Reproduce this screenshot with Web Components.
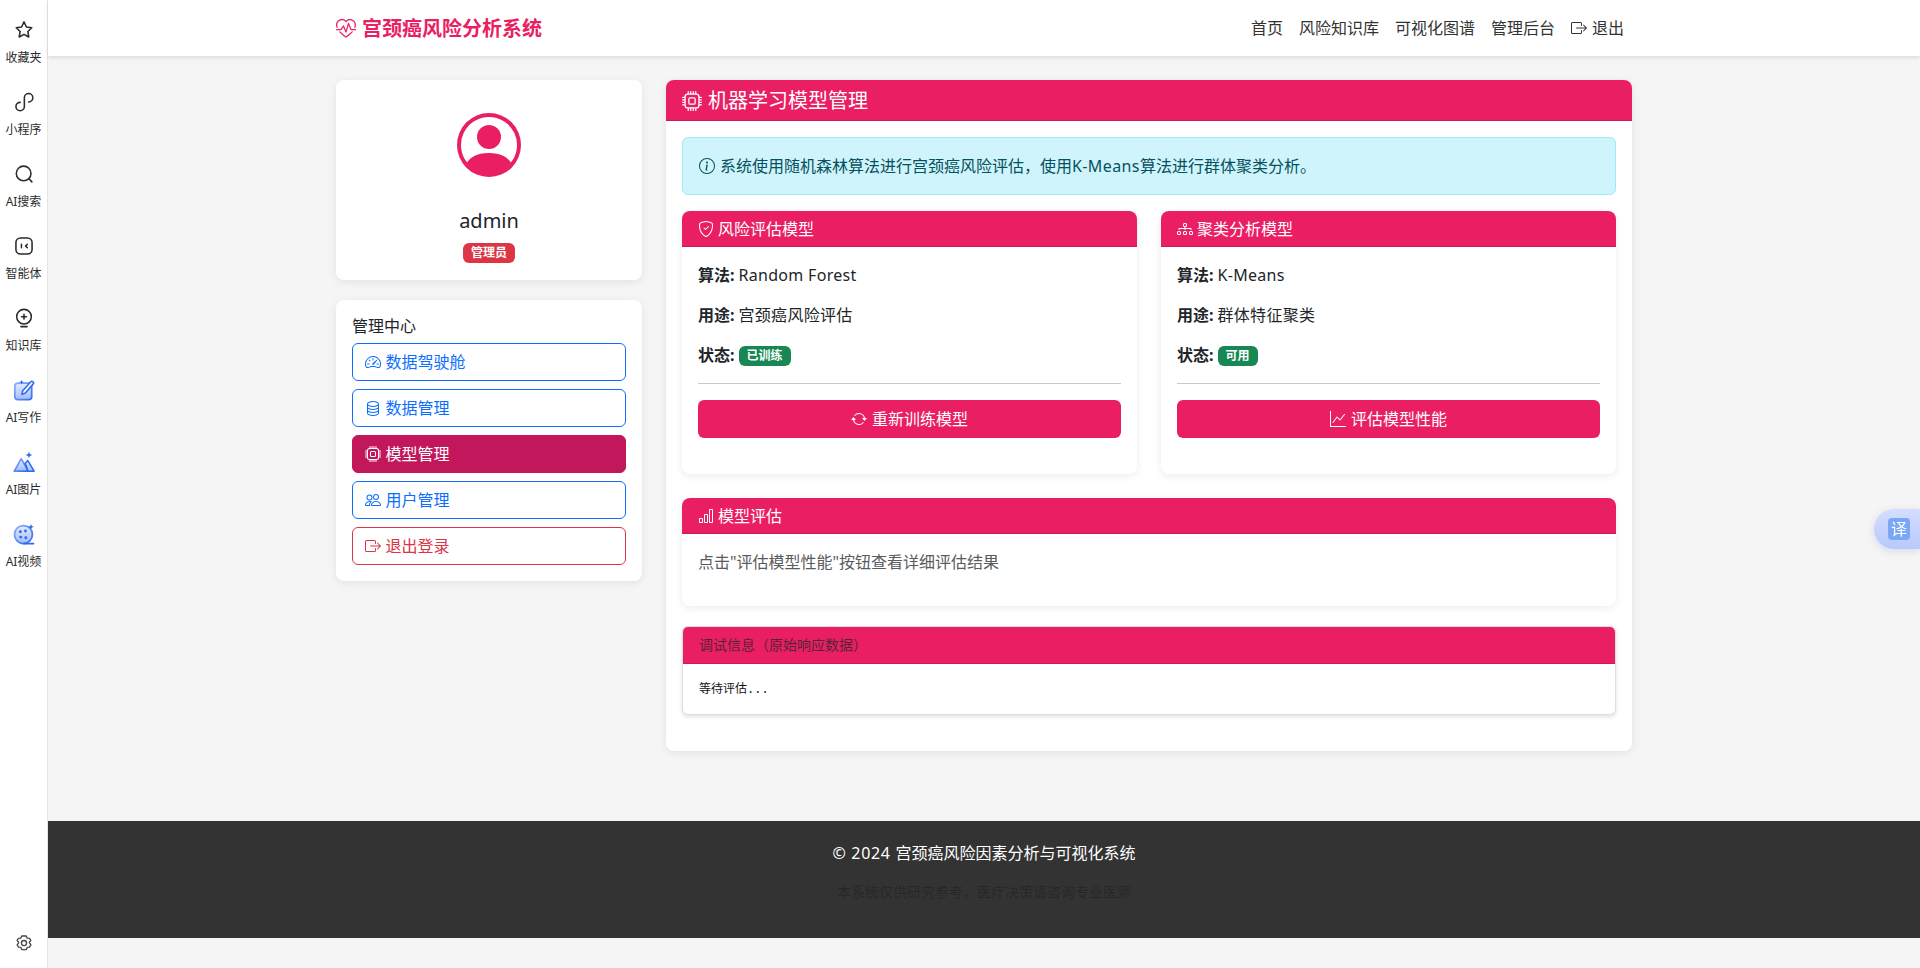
<!DOCTYPE html>
<html lang="zh-CN">
<head>
<meta charset="utf-8">
<title>宫颈癌风险分析系统</title>
<style>
  html, body {
    margin: 0;
    height: 100%;
  }

  body {
    display: flex;
    overflow: hidden;
    background: #f5f5f5;
    color: #212529;
    font: 16px/1.5 "Noto Sans", "Noto Sans CJK SC", sans-serif;
  }
</style>
</head>
<body>
  <side-rail>
    <rail-item icon="star">收藏夹</rail-item>
    <rail-item icon="mini">小程序</rail-item>
    <rail-item icon="search">AI搜索</rail-item>
    <rail-item icon="agent">智能体</rail-item>
    <rail-item icon="bulb">知识库</rail-item>
    <rail-item icon="write">AI写作</rail-item>
    <rail-item icon="image">AI图片</rail-item>
    <rail-item icon="video">AI视频</rail-item>
  </side-rail>

  <page-column>
    <top-nav></top-nav>

    <main-grid>
      <div slot="left">
        <profile-card name="admin" role="管理员"></profile-card>
        <menu-card heading="管理中心">
          <menu-btn icon="speedometer2">数据驾驶舱</menu-btn>
          <menu-btn icon="database">数据管理</menu-btn>
          <menu-btn icon="cpu" active>模型管理</menu-btn>
          <menu-btn icon="people">用户管理</menu-btn>
          <menu-btn icon="box-arrow-right" danger>退出登录</menu-btn>
        </menu-card>
      </div>

      <model-panel slot="right" heading="机器学习模型管理" icon="cpu">
        <info-alert><span>系统使用随机森林算法进行宫颈癌风险评估，使用<span style="letter-spacing:.4px">K-Means</span>算法进行群体聚类分析。</span></info-alert>
        <div class="pair" style="display:grid;grid-template-columns:1fr 1fr;gap:24px">
          <model-card heading="风险评估模型" icon="shield-check" algo="Random Forest" usage="宫颈癌风险评估" status="已训练" action="重新训练模型" action-icon="arrow-repeat"></model-card>
          <model-card heading="聚类分析模型" icon="diagram-3" algo="K-Means" usage="群体特征聚类" status="可用" action="评估模型性能" action-icon="graph-up"></model-card>
        </div>
        <eval-card heading="模型评估" icon="bar-chart">点击"评估模型性能"按钮查看详细评估结果</eval-card>
        <debug-box heading="调试信息（原始响应数据）">等待评估...</debug-box>
      </model-panel>
    </main-grid>

    <site-footer></site-footer>
  </page-column>

  <translate-fab></translate-fab>

<script>
const biPaths = {
  'heart-pulse': ['m8 2.748-.717-.737C5.6.281 2.514.878 1.4 3.053.918 3.995.78 5.323 1.508 7H.43c-2.128-5.697 4.165-8.83 7.394-5.857q.09.083.176.171a3 3 0 0 1 .176-.17c3.23-2.974 9.522.159 7.394 5.856h-1.078c.728-1.677.59-3.005.108-3.947C13.486.878 10.4.28 8.717 2.01zM2.212 10h1.315C4.593 11.183 6.05 12.458 8 13.795c1.949-1.337 3.407-2.612 4.473-3.795h1.315c-1.265 1.566-3.14 3.25-5.788 5-2.648-1.75-4.523-3.434-5.788-5', 'M10.464 3.314a.5.5 0 0 0-.945.049L7.921 8.956 6.464 5.314a.5.5 0 0 0-.88-.091L3.732 8H.5a.5.5 0 0 0 0 1H4a.5.5 0 0 0 .416-.223l1.473-2.209 1.647 4.118a.5.5 0 0 0 .945-.049l1.598-5.593 1.457 3.642A.5.5 0 0 0 12 9h3.5a.5.5 0 0 0 0-1h-3.162z'],
  'person-circle': ['M11 6a3 3 0 1 1-6 0 3 3 0 0 1 6 0', 'M0 8a8 8 0 1 1 16 0A8 8 0 0 1 0 8m8-7a7 7 0 0 0-5.468 11.37C3.242 11.226 4.805 10 8 10s4.757 1.225 5.468 2.37A7 7 0 0 0 8 1'],
  'speedometer2': ['M8 4a.5.5 0 0 1 .5.5V6a.5.5 0 0 1-1 0V4.5A.5.5 0 0 1 8 4M3.732 5.732a.5.5 0 0 1 .707 0l.915.914a.5.5 0 1 1-.708.708l-.914-.915a.5.5 0 0 1 0-.707M2 10a.5.5 0 0 1 .5-.5h1.586a.5.5 0 0 1 0 1H2.5A.5.5 0 0 1 2 10m9.5 0a.5.5 0 0 1 .5-.5h1.5a.5.5 0 0 1 0 1H12a.5.5 0 0 1-.5-.5m.754-4.246a.39.39 0 0 0-.527-.02L7.547 9.31a.91.91 0 1 0 1.302 1.258l3.434-4.297a.39.39 0 0 0-.029-.518z', 'M0 10a8 8 0 1 1 15.547 2.661c-.442 1.253-1.845 1.602-2.932 1.25C11.309 13.488 9.475 13 8 13c-1.474 0-3.31.488-4.615.911-1.087.352-2.49.003-2.932-1.25A8 8 0 0 1 0 10m8-7a7 7 0 0 0-6.603 9.329c.203.575.923.876 1.68.63C4.397 12.533 6.358 12 8 12s3.604.532 4.923.96c.757.245 1.477-.056 1.68-.631A7 7 0 0 0 8 3'],
  'database': ['M4.318 2.687C5.234 2.271 6.536 2 8 2s2.766.27 3.682.687C12.644 3.125 13 3.627 13 4c0 .374-.356.875-1.318 1.313C10.766 5.729 9.464 6 8 6s-2.766-.27-3.682-.687C3.356 4.875 3 4.373 3 4c0-.374.356-.875 1.318-1.313M13 5.698V7c0 .374-.356.875-1.318 1.313C10.766 8.729 9.464 9 8 9s-2.766-.27-3.682-.687C3.356 7.875 3 7.373 3 7V5.698c.271.202.58.378.904.525C4.978 6.711 6.427 7 8 7s3.022-.289 4.096-.777A5 5 0 0 0 13 5.698M14 4c0-1.007-.875-1.755-1.904-2.223C11.022 1.289 9.573 1 8 1s-3.022.289-4.096.777C2.875 2.245 2 2.993 2 4v9c0 1.007.875 1.755 1.904 2.223C4.978 15.71 6.427 16 8 16s3.022-.289 4.096-.777C13.125 14.755 14 14.007 14 13zm-1 4.698V10c0 .374-.356.875-1.318 1.313C10.766 11.729 9.464 12 8 12s-2.766-.27-3.682-.687C3.356 10.875 3 10.373 3 10V8.698c.271.202.58.378.904.525C4.978 9.71 6.427 10 8 10s3.022-.289 4.096-.777A5 5 0 0 0 13 8.698m0 3V13c0 .374-.356.875-1.318 1.313C10.766 14.729 9.464 15 8 15s-2.766-.27-3.682-.687C3.356 13.875 3 13.373 3 13v-1.302c.271.202.58.378.904.525C4.978 12.71 6.427 13 8 13s3.022-.289 4.096-.777c.324-.147.633-.323.904-.525'],
  'cpu': ['M5 0a.5.5 0 0 1 .5.5V2h1V.5a.5.5 0 0 1 1 0V2h1V.5a.5.5 0 0 1 1 0V2h1V.5a.5.5 0 0 1 1 0V2A2.5 2.5 0 0 1 14 4.5h1.5a.5.5 0 0 1 0 1H14v1h1.5a.5.5 0 0 1 0 1H14v1h1.5a.5.5 0 0 1 0 1H14v1h1.5a.5.5 0 0 1 0 1H14a2.5 2.5 0 0 1-2.5 2.5v1.5a.5.5 0 0 1-1 0V14h-1v1.5a.5.5 0 0 1-1 0V14h-1v1.5a.5.5 0 0 1-1 0V14h-1v1.5a.5.5 0 0 1-1 0V14A2.5 2.5 0 0 1 2 11.5H.5a.5.5 0 0 1 0-1H2v-1H.5a.5.5 0 0 1 0-1H2v-1H.5a.5.5 0 0 1 0-1H2v-1H.5a.5.5 0 0 1 0-1H2A2.5 2.5 0 0 1 4.5 2V.5A.5.5 0 0 1 5 0m-.5 3A1.5 1.5 0 0 0 3 4.5v7A1.5 1.5 0 0 0 4.5 13h7a1.5 1.5 0 0 0 1.5-1.5v-7A1.5 1.5 0 0 0 11.5 3zM5 6.5A1.5 1.5 0 0 1 6.5 5h3A1.5 1.5 0 0 1 11 6.5v3A1.5 1.5 0 0 1 9.5 11h-3A1.5 1.5 0 0 1 5 9.5zM6.5 6a.5.5 0 0 0-.5.5v3a.5.5 0 0 0 .5.5h3a.5.5 0 0 0 .5-.5v-3a.5.5 0 0 0-.5-.5z'],
  'people': ['M15 14s1 0 1-1-1-4-5-4-5 3-5 4 1 1 1 1zm-7.978-1L7 12.996c.001-.264.167-1.03.76-1.72C8.312 10.629 9.282 10 11 10c1.717 0 2.687.63 3.24 1.276.593.69.758 1.457.76 1.72l-.008.002-.014.002zM11 7a2 2 0 1 0 0-4 2 2 0 0 0 0 4m3-2a3 3 0 1 1-6 0 3 3 0 0 1 6 0M6.936 9.28a6 6 0 0 0-1.23-.247A7 7 0 0 0 5 9c-4 0-5 3-5 4q0 1 1 1h4.216A2.24 2.24 0 0 1 5 13c0-1.01.377-2.042 1.09-2.904.243-.294.526-.569.846-.816M4.92 10A5.5 5.5 0 0 0 4 13H1c0-.26.164-1.03.76-1.724.545-.636 1.492-1.256 3.16-1.275ZM1.5 5.5a3 3 0 1 1 6 0 3 3 0 0 1-6 0m3-2a2 2 0 1 0 0 4 2 2 0 0 0 0-4'],
  'box-arrow-right': ['M10 12.5a.5.5 0 0 1-.5.5h-8a.5.5 0 0 1-.5-.5v-9a.5.5 0 0 1 .5-.5h8a.5.5 0 0 1 .5.5v2a.5.5 0 0 0 1 0v-2A1.5 1.5 0 0 0 9.5 2h-8A1.5 1.5 0 0 0 0 3.5v9A1.5 1.5 0 0 0 1.5 14h8a1.5 1.5 0 0 0 1.5-1.5v-2a.5.5 0 0 0-1 0z', 'M15.854 8.354a.5.5 0 0 0 0-.708l-3-3a.5.5 0 0 0-.708.708L14.293 7.5H5.5a.5.5 0 0 0 0 1h8.793l-2.147 2.146a.5.5 0 0 0 .708.708z'],
  'info-circle': ['M8 15A7 7 0 1 1 8 1a7 7 0 0 1 0 14m0 1A8 8 0 1 0 8 0a8 8 0 0 0 0 16', 'm8.93 6.588-2.29.287-.082.38.45.083c.294.07.352.176.288.469l-.738 3.468c-.194.897.105 1.319.808 1.319.545 0 1.178-.252 1.465-.598l.088-.416c-.2.176-.492.246-.686.246-.275 0-.375-.193-.304-.533zM9 4.5a1 1 0 1 1-2 0 1 1 0 0 1 2 0'],
  'shield-check': ['M5.338 1.59a61 61 0 0 0-2.837.856.48.48 0 0 0-.328.39c-.554 4.157.726 7.19 2.253 9.188a10.7 10.7 0 0 0 2.287 2.233c.346.244.652.42.893.533q.18.085.293.118a1 1 0 0 0 .101.025 1 1 0 0 0 .1-.025q.114-.034.294-.118c.24-.113.547-.29.893-.533a10.7 10.7 0 0 0 2.287-2.233c1.527-1.997 2.807-5.031 2.253-9.188a.48.48 0 0 0-.328-.39c-.651-.213-1.75-.56-2.837-.855C9.552 1.29 8.531 1.067 8 1.067c-.53 0-1.552.223-2.662.524zM5.072.56C6.157.265 7.31 0 8 0s1.843.265 2.928.56c1.11.3 2.229.655 2.887.87a1.54 1.54 0 0 1 1.044 1.262c.596 4.477-.787 7.795-2.465 9.99a11.8 11.8 0 0 1-2.517 2.453 7 7 0 0 1-1.048.625c-.28.132-.581.24-.829.24s-.548-.108-.829-.24a7 7 0 0 1-1.048-.625 11.8 11.8 0 0 1-2.517-2.453C1.928 10.487.545 7.169 1.141 2.692A1.54 1.54 0 0 1 2.185 1.43 63 63 0 0 1 5.072.56', 'M10.854 5.146a.5.5 0 0 1 0 .708l-3 3a.5.5 0 0 1-.708 0l-1.5-1.5a.5.5 0 1 1 .708-.708L7.5 7.793l2.646-2.647a.5.5 0 0 1 .708 0'],
  'diagram-3': ['M6 3.5A1.5 1.5 0 0 1 7.5 2h1A1.5 1.5 0 0 1 10 3.5v1A1.5 1.5 0 0 1 8.5 6v1H14a.5.5 0 0 1 .5.5v1a.5.5 0 0 1-1 0V8h-5v.5a.5.5 0 0 1-1 0V8h-5v.5a.5.5 0 0 1-1 0v-1A.5.5 0 0 1 2 7h5.5V6A1.5 1.5 0 0 1 6 4.5zM8.5 5a.5.5 0 0 0 .5-.5v-1a.5.5 0 0 0-.5-.5h-1a.5.5 0 0 0-.5.5v1a.5.5 0 0 0 .5.5zM0 11.5A1.5 1.5 0 0 1 1.5 10h1A1.5 1.5 0 0 1 4 11.5v1A1.5 1.5 0 0 1 2.5 14h-1A1.5 1.5 0 0 1 0 12.5zm1.5-.5a.5.5 0 0 0-.5.5v1a.5.5 0 0 0 .5.5h1a.5.5 0 0 0 .5-.5v-1a.5.5 0 0 0-.5-.5zm4.5.5A1.5 1.5 0 0 1 7.5 10h1a1.5 1.5 0 0 1 1.5 1.5v1A1.5 1.5 0 0 1 8.5 14h-1A1.5 1.5 0 0 1 6 12.5zm1.5-.5a.5.5 0 0 0-.5.5v1a.5.5 0 0 0 .5.5h1a.5.5 0 0 0 .5-.5v-1a.5.5 0 0 0-.5-.5zm4.5.5a1.5 1.5 0 0 1 1.5-1.5h1a1.5 1.5 0 0 1 1.5 1.5v1a1.5 1.5 0 0 1-1.5 1.5h-1a1.5 1.5 0 0 1-1.5-1.5zm1.5-.5a.5.5 0 0 0-.5.5v1a.5.5 0 0 0 .5.5h1a.5.5 0 0 0 .5-.5v-1a.5.5 0 0 0-.5-.5z'],
  'arrow-repeat': ['M11.534 7h3.932a.25.25 0 0 1 .192.41l-1.966 2.36a.25.25 0 0 1-.384 0l-1.966-2.36a.25.25 0 0 1 .192-.41m-11 2h3.932a.25.25 0 0 0 .192-.41L2.692 6.23a.25.25 0 0 0-.384 0L.342 8.59A.25.25 0 0 0 .534 9', 'M8 3c-1.552 0-2.94.707-3.857 1.818a.5.5 0 1 1-.771-.636A6.002 6.002 0 0 1 13.917 7H12.9A5 5 0 0 0 8 3M3.1 9a5.002 5.002 0 0 0 8.757 2.182.5.5 0 1 1 .771.636A6.002 6.002 0 0 1 2.083 9z'],
  'graph-up': ['M0 0h1v15h15v1H0zm14.817 3.113a.5.5 0 0 1 .07.704l-4.5 5.5a.5.5 0 0 1-.74.037L7.06 6.767l-3.656 5.027a.5.5 0 0 1-.808-.588l4-5.5a.5.5 0 0 1 .758-.06l2.609 2.61 4.15-5.073a.5.5 0 0 1 .704-.07'],
  'bar-chart': ['M4 11H2v3h2zm5-4H7v7h2zm5-5v12h-2V2zm-2-1a1 1 0 0 0-1 1v12a1 1 0 0 0 1 1h2a1 1 0 0 0 1-1V2a1 1 0 0 0-1-1zM6 7a1 1 0 0 1 1-1h2a1 1 0 0 1 1 1v7a1 1 0 0 1-1 1H7a1 1 0 0 1-1-1zm-5 4a1 1 0 0 1 1-1h2a1 1 0 0 1 1 1v3a1 1 0 0 1-1 1H2a1 1 0 0 1-1-1z']
};

// bootstrap style glyph, size comes from the size attribute
class BiIcon extends HTMLElement {
  connectedCallback() {
    const size = this.getAttribute('size') || 16;
    const paths = (biPaths[this.getAttribute('name')] || []).map(d => `<path d="${d}"/>`).join('');
    this.attachShadow({ mode: 'open' }).innerHTML = `
      <style>
        :host { display: inline-flex; flex: none; }
        svg { display: block; fill: currentColor; }
      </style>
      <svg width="${size}" height="${size}" viewBox="0 0 16 16">${paths}</svg>
    `;
  }
}
customElements.define('bi-icon', BiIcon);

const railDefs = `
  <linearGradient id="g" x1="0" y1="0" x2="1" y2="1">
    <stop offset="0" stop-color="#8fb0fb"/><stop offset="1" stop-color="#2f6bf0"/>
  </linearGradient>
  <linearGradient id="f" x1="0" y1="0" x2="0" y2="1">
    <stop offset="0" stop-color="#e4ebff"/><stop offset="1" stop-color="#a3bdfb"/>
  </linearGradient>`;

const railIcons = {
  star: `<path d="M12 3.2l2.6 5.5 5.9.8-4.3 4.1 1 6-5.2-2.9-5.2 2.9 1-6-4.3-4.1 5.9-.8z" fill="none" stroke="#2b2b2b" stroke-width="1.7" stroke-linejoin="round"/>`,
  mini: `<path d="M7.8 12.4a4.6 4.6 0 1 0 4.6 4.6V7.4A4.6 4.6 0 1 1 17 12" fill="none" stroke="#2b2b2b" stroke-width="1.7" stroke-linecap="round"/>`,
  search: `<circle cx="11.6" cy="11.4" r="8" fill="none" stroke="#2b2b2b" stroke-width="1.7"/><path d="M17.6 17.4l3 3.2" stroke="#2b2b2b" stroke-width="1.7" stroke-linecap="round"/>`,
  agent: `<rect x="3.2" y="3.2" width="17.6" height="17.6" rx="5" fill="none" stroke="#2b2b2b" stroke-width="1.7"/><path d="M9.2 10.2v3.6M15.6 10.2l-2 1.8 2 1.8" fill="none" stroke="#2b2b2b" stroke-width="1.6" stroke-linecap="round" stroke-linejoin="round"/>`,
  bulb: `<circle cx="12" cy="10.6" r="8" fill="none" stroke="#2b2b2b" stroke-width="1.7"/><path d="M12 8v5.2M9.4 10.6h5.2" stroke="#2b2b2b" stroke-width="1.7" stroke-linecap="round"/><path d="M8.6 21.4h6.8" stroke="#2b2b2b" stroke-width="1.7" stroke-linecap="round"/>`,
  write: `<defs>${railDefs}</defs><rect x="2" y="4.4" width="18.4" height="18" rx="3.4" fill="url(#f)" stroke="url(#g)" stroke-width="1.9"/><path d="M9.8 16.8l.8-4 8.6-9.6a1.8 1.8 0 0 1 2.7 2.4l-8.4 9.6z" fill="#fff" stroke="#2f6bf0" stroke-width="1.7" stroke-linejoin="round"/><path d="M9.4.8l.7 1.9 1.9.7-1.9.7-.7 1.9-.7-1.9-1.9-.7 1.9-.7z" fill="#2f6bf0"/>`,
  image: `<defs>${railDefs}</defs><path d="M1.4 22L9 8.4 16.6 22z" fill="url(#f)" stroke="url(#g)" stroke-width="1.9" stroke-linejoin="round"/><path d="M13.4 13.4l2.8-3L23 22h-6.6z" fill="url(#f)" stroke="#2f6bf0" stroke-width="1.7" stroke-linejoin="round"/><path d="M17.4 .8l1 2.6 2.6 1-2.6 1-1 2.6-1-2.6-2.6-1 2.6-1z" fill="#2f6bf0"/>`,
  video: `<defs>${railDefs}</defs><circle cx="11.4" cy="12.6" r="9.8" fill="url(#f)" stroke="url(#g)" stroke-width="1.9"/><circle cx="8" cy="9.6" r="1.6" fill="#2f6bf0"/><circle cx="13.6" cy="8.8" r="1.6" fill="#2f6bf0"/><circle cx="8.4" cy="15.4" r="1.6" fill="#2f6bf0"/><circle cx="14" cy="16" r="1.6" fill="#2f6bf0"/><path d="M12 22.4h10.4" stroke="#2f6bf0" stroke-width="1.9" stroke-linecap="round"/><path d="M19.6 1l.9 2.3 2.3.9-2.3.9-.9 2.3-.9-2.3-2.3-.9 2.3-.9z" fill="#2f6bf0"/>`
};

class RailItem extends HTMLElement {
  connectedCallback() {
    const icon = railIcons[this.getAttribute('icon')];
    this.attachShadow({ mode: 'open' }).innerHTML = `
      <style>
        :host {
          display: flex;
          flex-direction: column;
          align-items: center;
          height: 72px;
          padding-top: 19px;
          box-sizing: border-box;
          font-size: 12px;
          line-height: 16px;
          color: #2b2b2b;
          white-space: nowrap;
        }
        svg { display: block; margin-bottom: 9px; }
      </style>
      <svg width="22" height="22" viewBox="0 0 24 24">${icon}</svg>
      <slot></slot>
    `;
  }
}
customElements.define('rail-item', RailItem);

const railTemplate = document.createElement('template');
railTemplate.innerHTML = `
  <style>
    :host {
      display: flex;
      flex-direction: column;
      flex: none;
      width: 48px;
      height: 100vh;
      box-sizing: border-box;
      background: #fff;
      border-right: 1px solid #e6e6e6;
    }
    .gear {
      display: block;
      margin: auto auto 16px;
    }
  </style>
  <slot></slot>
  <svg class="gear" width="18" height="18" viewBox="0 0 24 24" fill="none" stroke="#4a4a4a" stroke-width="1.8" stroke-linejoin="round">
    <path d="M9 2.6h6l1.2 2.9 3.1.4 1.8 2.6-1.9 2.5.1.9 1.9 2.5-1.8 3.1-3.1.4-1.3 2.9H9l-1.2-2.9-3.1-.4-1.8-3.1 1.9-2.5-.1-.9-1.9-2.5 1.8-2.6 3.1-.4z"/>
    <circle cx="12" cy="12" r="3.4"/>
  </svg>
`;

class SideRail extends HTMLElement {
  constructor() {
    super();
    this.attachShadow({ mode: 'open' }).appendChild(railTemplate.content.cloneNode(true));
  }
}
customElements.define('side-rail', SideRail);

class PageColumn extends HTMLElement {
  constructor() {
    super();
    this.attachShadow({ mode: 'open' }).innerHTML = `
      <style>
        :host { display: flex; flex-direction: column; flex: 1; min-width: 0; }
      </style>
      <slot></slot>
    `;
  }
}
customElements.define('page-column', PageColumn);

const navTemplate = document.createElement('template');
navTemplate.innerHTML = `
  <style>
    :host {
      display: block;
      flex: none;
      height: 56px;
      background: #fff;
      box-shadow: 0 2px 4px rgba(0, 0, 0, 0.1);
    }
    .inner {
      display: flex;
      align-items: center;
      justify-content: space-between;
      box-sizing: border-box;
      width: 1320px;
      height: 100%;
      margin: 0 auto;
      padding: 0 12px;
    }
    .brand {
      display: flex;
      align-items: center;
      gap: 6px;
      padding-top: 1px;
      color: #e91e63;
      font-size: 20px;
      font-weight: 700;
    }
    nav { display: flex; }
    a {
      display: flex;
      align-items: center;
      padding: 8px;
      color: #333;
      text-decoration: none;
    }
    a bi-icon { margin-right: 5px; }
  </style>
  <div class="inner">
    <div class="brand"><bi-icon name="heart-pulse" size="20"></bi-icon>宫颈癌风险分析系统</div>
    <nav>
      <a href="#">首页</a>
      <a href="#">风险知识库</a>
      <a href="#">可视化图谱</a>
      <a href="#">管理后台</a>
      <a href="#"><bi-icon name="box-arrow-right"></bi-icon>退出</a>
    </nav>
  </div>
`;

class TopNav extends HTMLElement {
  constructor() {
    super();
    this.attachShadow({ mode: 'open' }).appendChild(navTemplate.content.cloneNode(true));
  }
}
customElements.define('top-nav', TopNav);

class MainGrid extends HTMLElement {
  constructor() {
    super();
    this.attachShadow({ mode: 'open' }).innerHTML = `
      <style>
        :host {
          display: grid;
          grid-template-columns: 306px 966px;
          gap: 24px;
          align-items: start;
          box-sizing: border-box;
          width: 1320px;
          margin: 24px auto 0;
          padding: 0 12px;
        }
      </style>
      <slot name="left"></slot>
      <slot name="right"></slot>
    `;
  }
}
customElements.define('main-grid', MainGrid);

const cardLook = `
  background: #fff;
  border-radius: 8px;
  box-shadow: 0 2px 8px rgba(0, 0, 0, 0.08);
`;

class ProfileCard extends HTMLElement {
  connectedCallback() {
    this.attachShadow({ mode: 'open' }).innerHTML = `
      <style>
        :host {
          display: flex;
          flex-direction: column;
          align-items: center;
          box-sizing: border-box;
          height: 200px;
          margin-bottom: 20px;
          padding-top: 33px;
          color: #e91e63;
          ${cardLook}
        }
        .name { margin-top: 32px; color: #212529; font-size: 20px; line-height: 24px; }
        .badge {
          margin-top: 10px;
          padding: 4px 8px;
          border-radius: 6px;
          background: #dc3545;
          color: #fff;
          font-size: 12px;
          font-weight: 700;
          line-height: 12px;
        }
      </style>
      <bi-icon name="person-circle" size="64"></bi-icon>
      <div class="name">${this.getAttribute('name')}</div>
      <div class="badge">${this.getAttribute('role')}</div>
    `;
  }
}
customElements.define('profile-card', ProfileCard);

class MenuCard extends HTMLElement {
  connectedCallback() {
    this.attachShadow({ mode: 'open' }).innerHTML = `
      <style>
        :host {
          display: flex;
          flex-direction: column;
          gap: 8px;
          box-sizing: border-box;
          padding: 16px;
          ${cardLook}
        }
        .title { height: 19px; font-size: 16px; line-height: 21px; }
      </style>
      <div class="title">${this.getAttribute('heading')}</div>
      <slot></slot>
    `;
  }
}
customElements.define('menu-card', MenuCard);

class MenuBtn extends HTMLElement {
  connectedCallback() {
    const accent = this.hasAttribute('danger') ? '#dc3545' : '#0d6efd';
    const active = this.hasAttribute('active');
    this.attachShadow({ mode: 'open' }).innerHTML = `
      <style>
        :host {
          display: flex;
          align-items: center;
          box-sizing: border-box;
          height: 38px;
          padding: 0 12px;
          border: 1px solid ${active ? '#c2185b' : accent};
          border-radius: 6px;
          background: ${active ? '#c2185b' : 'transparent'};
          color: ${active ? '#fff' : accent};
          cursor: pointer;
        }
        bi-icon { margin-right: 4.6px; }
      </style>
      <bi-icon name="${this.getAttribute('icon')}"></bi-icon><slot></slot>
    `;
  }
}
customElements.define('menu-btn', MenuBtn);

class ModelPanel extends HTMLElement {
  connectedCallback() {
    this.attachShadow({ mode: 'open' }).innerHTML = `
      <style>
        :host {
          display: block;
          ${cardLook}
        }
        header {
          display: flex;
          align-items: center;
          gap: 6px;
          box-sizing: border-box;
          height: 41px;
          padding: 2px 16px 0;
          border-bottom: 1px solid rgba(0, 0, 0, 0.125);
          border-radius: 8px 8px 0 0;
          background: #e91e63;
          color: #fff;
          font-size: 20px;
        }
        .body { padding: 16px; }
      </style>
      <header><bi-icon name="${this.getAttribute('icon')}" size="20"></bi-icon>${this.getAttribute('heading')}</header>
      <div class="body"><slot></slot></div>
    `;
  }
}
customElements.define('model-panel', ModelPanel);

class InfoAlert extends HTMLElement {
  constructor() {
    super();
    this.attachShadow({ mode: 'open' }).innerHTML = `
      <style>
        :host {
          display: flex;
          align-items: center;
          box-sizing: border-box;
          height: 58px;
          margin-bottom: 16px;
          padding: 0 16px;
          border: 1px solid #9eeaf9;
          border-radius: 6px;
          background: #cff4fc;
          color: #055160;
        }
        bi-icon { margin-right: 5px; }
      </style>
      <bi-icon name="info-circle"></bi-icon><slot></slot>
    `;
  }
}
customElements.define('info-alert', InfoAlert);

// shared header for the inner cards
const subHeader = (icon, heading) => `
  <header><bi-icon name="${icon}"></bi-icon>${heading}</header>
`;
const subHeaderStyle = `
  header {
    display: flex;
    align-items: center;
    gap: 4px;
    box-sizing: border-box;
    height: 36.2px;
    padding: 0 16px;
    border-bottom: 1px solid rgba(0, 0, 0, 0.125);
    border-radius: 8px 8px 0 0;
    background: #e91e63;
    color: #fff;
  }
`;

class ModelCard extends HTMLElement {
  connectedCallback() {
    const attr = name => this.getAttribute(name);
    this.attachShadow({ mode: 'open' }).innerHTML = `
      <style>
        :host {
          display: block;
          margin-bottom: 24px;
          ${cardLook}
        }
        ${subHeaderStyle}
        .body { padding: 16px 16px 36px; }
        p { display: flex; align-items: center; height: 24px; margin: 0 0 16px; white-space: pre; }
        b { font-weight: 700; }
        .val { margin-left: 4px; letter-spacing: .3px; }
        .badge {
          margin: 2px 0 0 4px;
          padding: 4px 8px;
          border-radius: 6px;
          background: #198754;
          color: #fff;
          font-size: 12px;
          font-weight: 700;
          line-height: 12px;
        }
        hr { margin: 0 0 16px; border: 0; border-top: 1px solid #c8c9ca; }
        button {
          display: flex;
          align-items: center;
          justify-content: center;
          gap: 5px;
          width: 100%;
          height: 38px;
          padding: 0;
          border: 0;
          border-radius: 6px;
          background: #e91e63;
          color: #fff;
          font: inherit;
          cursor: pointer;
        }
      </style>
      ${subHeader(attr('icon'), attr('heading'))}
      <div class="body">
        <p><b>算法:</b><span class="val">${attr('algo')}</span></p>
        <p><b>用途:</b><span class="val">${attr('usage')}</span></p>
        <p><b>状态:</b><span class="badge">${attr('status')}</span></p>
        <hr>
        <button><bi-icon name="${attr('action-icon')}"></bi-icon>${attr('action')}</button>
      </div>
    `;
  }
}
customElements.define('model-card', ModelCard);

class EvalCard extends HTMLElement {
  connectedCallback() {
    this.attachShadow({ mode: 'open' }).innerHTML = `
      <style>
        :host {
          display: block;
          ${cardLook}
        }
        ${subHeaderStyle}
        .body { padding: 16px 16px 32px; color: #595c5f; }
      </style>
      ${subHeader(this.getAttribute('icon'), this.getAttribute('heading'))}
      <div class="body"><slot></slot></div>
    `;
  }
}
customElements.define('eval-card', EvalCard);

class DebugBox extends HTMLElement {
  connectedCallback() {
    this.attachShadow({ mode: 'open' }).innerHTML = `
      <style>
        :host {
          display: block;
          margin: 20px 0;
          border: 1px solid rgba(0, 0, 0, 0.125);
          border-radius: 6px;
          background: #fff;
          box-shadow: 0 2px 4px rgba(0, 0, 0, 0.12);
        }
        header {
          display: flex;
          align-items: center;
          box-sizing: border-box;
          height: 36.2px;
          padding: 0 16px;
          border-bottom: 1px solid rgba(0, 0, 0, 0.125);
          border-radius: 5px 5px 0 0;
          background: #e91e63;
          color: rgba(33, 37, 41, 0.75);
          font-size: 14px;
        }
        .body {
          padding: 17px 16px 15px;
          color: #111;
          font: 12px/18px "Liberation Mono", "Noto Sans CJK SC", monospace;
        }
      </style>
      <header>${this.getAttribute('heading')}</header>
      <div class="body"><slot></slot></div>
    `;
  }
}
customElements.define('debug-box', DebugBox);

const footerTemplate = document.createElement('template');
footerTemplate.innerHTML = `
  <style>
    :host {
      display: block;
      flex: none;
      box-sizing: border-box;
      height: 117px;
      margin-top: 70px;
      padding-top: 20px;
      background: #333;
      color: #fff;
      text-align: center;
    }
    p { margin: 0 0 16px; }
    .year { letter-spacing: .7px; }
    .note { color: rgba(33, 37, 41, 0.75); font-size: 14px; line-height: 21px; }
  </style>
  <p><span class="year">© 2024 </span>宫颈癌风险因素分析与可视化系统</p>
  <p class="note">本系统仅供研究参考，医疗决策请咨询专业医师</p>
`;

class SiteFooter extends HTMLElement {
  constructor() {
    super();
    this.attachShadow({ mode: 'open' }).appendChild(footerTemplate.content.cloneNode(true));
  }
}
customElements.define('site-footer', SiteFooter);

class TranslateFab extends HTMLElement {
  constructor() {
    super();
    this.attachShadow({ mode: 'open' }).innerHTML = `
      <style>
        :host {
          position: fixed;
          top: 509px;
          right: 0;
          display: flex;
          align-items: center;
          box-sizing: border-box;
          width: 46px;
          height: 40px;
          padding-left: 14px;
          border-radius: 20px 0 0 20px;
          background: linear-gradient(180deg, #d5defe, #b9c8fb);
          box-shadow: 0 2px 8px rgba(90, 110, 200, 0.2);
        }
        span {
          display: flex;
          align-items: center;
          justify-content: center;
          width: 22px;
          height: 22px;
          border-radius: 4px;
          background: #7aa7f7;
          color: #fff;
          font-size: 16px;
          line-height: 1;
        }
      </style>
      <span>译</span>
    `;
  }
}
customElements.define('translate-fab', TranslateFab);
</script>
</body>
</html>
